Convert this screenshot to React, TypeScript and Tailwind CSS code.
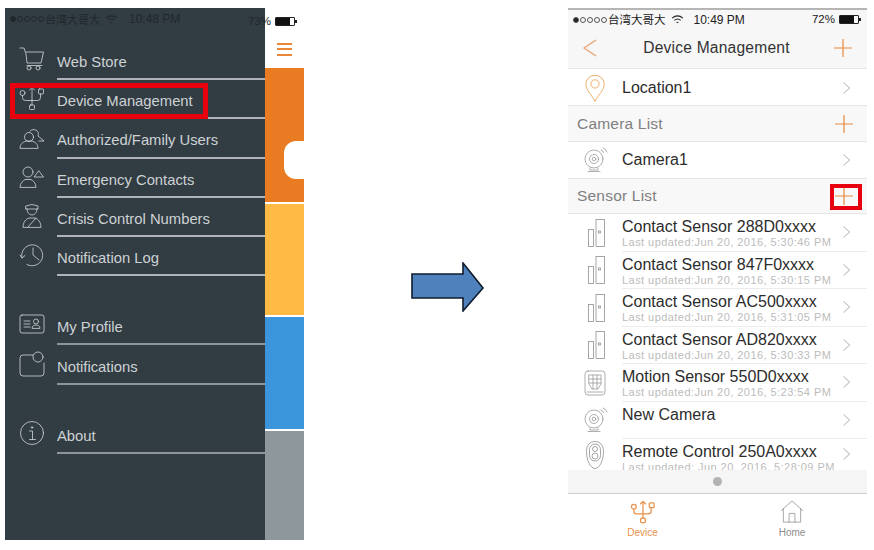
import { ReactNode } from "react";

const font = "font-['Liberation_Sans',Arial,sans-serif]";
const cjk = "font-['Noto_Sans_CJK_SC','Liberation_Sans',sans-serif]";

function Ico({ children, className = "" }: { children: ReactNode; className?: string }) {
  return (
    <svg viewBox="0 0 26 26" fill="none" stroke="currentColor" strokeWidth="0.8" strokeLinecap="round" strokeLinejoin="round" className={className}>
      {children}
    </svg>
  );
}

const DeviceTree = (
  <>
    <path d="M13 4v16M10.500 5 13 2.500 15.500 5" />
    <rect x="10.500" y="20" width="5" height="4.500" rx="1" />
    <circle cx="3.500" cy="8" r="2.500" />
    <rect x="19.500" y="4" width="5" height="5" rx="1" />
    <path d="M3.500 10.500v2q0 3 3 3H13M21.500 9v3.500q0 3-3 3H13" />
  </>
);

const menuIcons: Record<string, ReactNode> = {
  "Web Store": (
    <>
      <path d="M1 2h4l2 6 1 9h14l2.500-11H7M8 19.500h15" />
      <circle cx="10" cy="22" r="2" />
      <circle cx="19" cy="22" r="2" />
    </>
  ),
  "Device Management": DeviceTree,
  "Authorized/Family Users": (
    <>
      <path d="M11 7a5 5 0 0 1 8 1c.5 1 .5 2 0 4l6 5h-5" />
      <circle cx="10" cy="13" r="4.500" />
      <path d="M1 24c0-4 3-6 6-7h6c3 1 6 3 6 7z" />
    </>
  ),
  "Emergency Contacts": (
    <>
      <circle cx="9" cy="8" r="5" />
      <path d="M1 23c0-4 3-6 5-7.500h6c2 1 5 3.500 5 7.500z" />
      <path d="M20 7l4.500 6h-9z" />
    </>
  ),
  "Crisis Control Numbers": (
    <>
      <path d="M7 3l6-1.500L19 3v3H7zM8 6c0 8 10 8 10 0" />
      <path d="M4 24c0-5 3-8 6-9h6c3 1 6 4 6 9zM9 24l8-9" />
    </>
  ),
  "Notification Log": (
    <>
      <path d="M3 16A10.500 10.500 0 1 1 8 22.500M1 13l2 3 3-2.500" />
      <path d="M14 6v7l6 5" />
    </>
  ),
  "My Profile": (
    <>
      <rect x="1" y="4" width="24" height="18" rx="2" />
      <path d="M5 10h6M5 13h6M5 16h6" />
      <circle cx="17" cy="10.500" r="2.500" />
      <path d="M13 17c0-2 2-3 4-3s4 1 4 3z" />
    </>
  ),
  Notifications: (
    <>
      <path d="M14 4H4a3 3 0 0 0-3 3v15a3 3 0 0 0 3 3h18a3 3 0 0 0 3-3V12" />
      <circle cx="19" cy="6" r="5" />
    </>
  ),
  About: (
    <>
      <circle cx="13" cy="13" r="11.500" />
      <circle cx="13" cy="7.500" r="0.800" />
      <path d="M10.500 11H13.500V19M10.500 19.500h6" />
    </>
  ),
};

function MenuRow({ label, h = "h-[39.200px]", line = "border-[#aeb4b7]" }: { label: string; h?: string; line?: string }) {
  return (
    <div className={`flex items-center pl-[14px] ${h}`}>
      <Ico className="w-[26px] h-[26px] text-[#d3d7d9] shrink-0 -mt-[3px]">{menuIcons[label]}</Ico>
      <div className={`ml-[12px] flex-1 h-full pt-[5px] flex items-center border-b-2 ${line} text-[14.800px] text-[#cdd2d4]`}>
        {label}
      </div>
    </div>
  );
}

function Dots({ color }: { color: string }) {
  return (
    <span className="flex gap-[1px] w-[34px] shrink-0">
      <span className={`w-[6px] h-[6px] rounded-full border ${color} bg-current`} />
      <span className={`w-[6px] h-[6px] rounded-full border ${color}`} />
      <span className={`w-[6px] h-[6px] rounded-full border ${color}`} />
      <span className={`w-[6px] h-[6px] rounded-full border ${color}`} />
      <span className={`w-[6px] h-[6px] rounded-full border ${color}`} />
    </span>
  );
}

function Wifi({ stroke }: { stroke: string }) {
  return (
    <svg viewBox="0 0 14 10" fill="none" stroke={stroke} strokeWidth="1.200" className="w-[13px] h-[9px] shrink-0">
      <path d="M1 3.500q6-5 12 0M3.500 6q3.500-3 7 0M6 8.500q1-1 2 0" />
    </svg>
  );
}

function Battery({ fill }: { fill: string }) {
  return (
    <span className="flex items-center ml-[4px]">
      <span className="w-[20px] h-[9px] border border-[#222] rounded-[1px] flex">
        <span className={`w-[14px] ${fill}`} />
      </span>
      <span className="w-[2px] h-[3px] bg-[#222]" />
    </span>
  );
}

function Chevron() {
  return (
    <svg viewBox="0 0 10 16" fill="none" stroke="#c9c9c9" strokeWidth="1.300" className="w-[9px] h-[14px] shrink-0">
      <path d="M1.500 1.500 8.500 8l-7 6.500" />
    </svg>
  );
}

function Plus() {
  return (
    <svg viewBox="0 0 18 18" stroke="#e88a3c" strokeWidth="1.200" className="w-[18px] h-[18px]">
      <path d="M0 9h18M9 0v18" />
    </svg>
  );
}

const gray = "text-[#9a9a9a]";

function CamIcon() {
  return (
    <Ico className={`w-[26px] h-[28px] ${gray}`}>
      <circle cx="12" cy="12" r="9" />
      <circle cx="12" cy="12" r="4.500" />
      <circle cx="12" cy="12" r="1.800" />
      <path d="M8 21v2h8v-2M6 24.500h12M19 3q2 .5 2.500 2.500M21 1q3 .5 4 4" />
    </Ico>
  );
}

function ContactIcon() {
  return (
    <svg viewBox="0 0 17 28" fill="none" stroke="#8f8f8f" strokeWidth="0.8" className="w-[17px] h-[28px] ml-[2px]">
      <rect x="0.500" y="10.500" width="5" height="17" />
      <rect x="8" y="0.500" width="8.500" height="27" />
      <rect x="10.500" y="12" width="2" height="2" />
    </svg>
  );
}

function MotionIcon() {
  return (
    <Ico className={`w-[26px] h-[28px] ${gray}`}>
      <rect x="3" y="1" width="20" height="24" rx="3" />
      <path d="M7 5h12v9l-3 5h-6l-3-5zM7 9h12M7 13h12M11 5v14M15 5v14M5 22h16" />
    </Ico>
  );
}

function RemoteIcon() {
  return (
    <svg viewBox="0 0 18 28" fill="none" stroke="#8f8f8f" strokeWidth="0.8" className="w-[18px] h-[28px]">
      <path d="M9 .500c5 0 8.500 3.500 8.500 10 0 9-4 17-8.500 17S.500 19.500.500 10.500C.500 4 4 .500 9 .500z" />
      <rect x="3.500" y="3" width="11" height="17" rx="5.500" />
      <circle cx="9" cy="8" r="2.500" />
      <circle cx="9" cy="15" r="3" />
    </svg>
  );
}

function PinIcon() {
  return (
    <svg viewBox="0 0 24 30" fill="none" stroke="#eaa65e" strokeWidth="1" className="w-[22px] h-[29px]">
      <path d="M12 29C8 21 2 17 2 10.500a10 10 0 0 1 20 0C22 17 16 21 12 29z" />
      <circle cx="12" cy="10" r="4.500" />
    </svg>
  );
}

function NavRow({ icon, title, h }: { icon: ReactNode; title: string; h: string }) {
  return (
    <div className={`flex items-center bg-white shrink-0 ${h} border-b border-[#e6e6e6]`}>
      <div className="w-[54px] flex justify-center shrink-0">{icon}</div>
      <div className="flex-1 text-[16px] text-[#2c2c2c]">{title}</div>
      <div className="pr-[16px]"><Chevron /></div>
    </div>
  );
}

function SectionHead({ title, h }: { title: string; h: string }) {
  return (
    <div className={`flex items-center justify-between bg-[#f8f8f8] shrink-0 pl-[9px] pr-[14px] ${h} border-b border-[#e6e6e6]`}>
      <span className="text-[15.500px] text-[#808080] tracking-[0.2px]">{title}</span>
      <Plus />
    </div>
  );
}

function SensorRow({ icon, title, sub, h = "h-[37.500px]", clip = false }: { icon: ReactNode; title: string; sub?: string; h?: string; clip?: boolean }) {
  return (
    <div className={`flex bg-white shrink-0 ${h} ${clip ? "overflow-hidden" : ""}`}>
      <div className="w-[54px] flex justify-center items-center shrink-0">{icon}</div>
      <div className={`flex-1 flex items-center border-b ${clip ? "border-transparent" : "border-[#ececec]"} min-w-0`}>
        <div className="flex-1 pt-[4px] h-full">
          <div className="text-[16px] leading-[18px] text-[#2c2c2c] whitespace-nowrap">{title}</div>
          {sub && <div className="text-[11px] leading-[13px] text-[#bcbcbc] tracking-[0.45px] whitespace-nowrap">{sub}</div>}
        </div>
        <div className="pr-[16px]"><Chevron /></div>
      </div>
    </div>
  );
}

export default function App() {
  return (
    <div className={`w-[874px] h-[550px] bg-white flex items-start overflow-hidden ${font}`}>
      {/* left phone */}
      <div className="relative ml-[5px] mt-[8px] w-[299px] h-[532px] flex">
        <div className="w-[260px] h-full bg-[#323c43]">
          <div className="h-[22px] flex items-center pl-[5px] text-[11px] text-[#20282c]">
            <Dots color="border-[#20282c]" />
            <span className={`ml-[1px] ${cjk}`}>台湾大哥大</span>
            <span className="ml-[5px]"><Wifi stroke="#20282c" /></span>
            <span className="ml-[11px] text-[12px] font-medium whitespace-nowrap">10:48 PM</span>
          </div>
          <div className="h-[11px]" />
          {["Web Store", "Device Management", "Authorized/Family Users", "Emergency Contacts", "Crisis Control Numbers", "Notification Log"].map((l) => (
            <MenuRow key={l} label={l} />
          ))}
          <div className="h-[29px]" />
          <MenuRow label="My Profile" h="h-[40px]" line="border-[#8d9599]" />
          <MenuRow label="Notifications" h="h-[40px]" line="border-[#8d9599]" />
          <div className="h-[29px]" />
          <MenuRow label="About" h="h-[40px]" line="border-[#8d9599]" />
        </div>
        <div className="w-[39px] h-full flex flex-col">
          <div className="h-[60px] bg-white flex items-center justify-center">
            <div className="w-[15px] flex flex-col gap-[3.500px] mt-[22px]">
              <div className="h-[2px] bg-[#e8873a]" />
              <div className="h-[2px] bg-[#e8873a]" />
              <div className="h-[2px] bg-[#e8873a]" />
            </div>
          </div>
          <div className="h-[134px] bg-[#e97b22] flex items-center justify-end">
            <div className="w-[20px] h-[38px] bg-white rounded-l-[12px] mt-[50px]" />
          </div>
          <div className="h-[2px] bg-white" />
          <div className="h-[111px] bg-[#feba45]" />
          <div className="h-[2px] bg-white" />
          <div className="h-[112px] bg-[#3b95db]" />
          <div className="h-[2px] bg-white" />
          <div className="flex-1 bg-[#8e979b]" />
        </div>
        {/* status bar right part, spans panel and strip */}
        <div className="absolute right-[7px] top-[5px] flex items-center text-[11.500px] text-[#20282c]">
          <span>73%</span>
          <Battery fill="bg-[#111]" />
        </div>
        {/* highlight */}
        <div className="absolute left-[5px] top-[75px] w-[198px] h-[36px] border-[5px] border-[#e8000f]" />
      </div>

      {/* arrow */}
      <svg viewBox="0 0 74 50" className="ml-[107px] mt-[262px] w-[74px] h-[50px] shrink-0">
        <path d="M1 12h51V1l20 25-20 23V36H1z" fill="#4f81bd" stroke="#0f1c2e" strokeWidth="1.600" />
      </svg>

      {/* right phone */}
      <div className="relative ml-[83px] mt-[8px] w-[299px] h-[532px] flex flex-col border-t-2 border-[#b5b5b5]">
        <div className="h-[59px] shrink-0 bg-[#f7f7f7] border-b border-[#e6e6e6]">
          <div className="h-[19px] flex items-center pl-[5px] pr-[6px] text-[11.500px] text-[#222]">
            <Dots color="border-[#555]" />
            <span className={`ml-[1px] ${cjk}`}>台湾大哥大</span>
            <span className="ml-[5px]"><Wifi stroke="#222" /></span>
            <span className="ml-[10px] text-[12px] font-medium whitespace-nowrap">10:49 PM</span>
            <span className="ml-auto">72%</span>
            <Battery fill="bg-[#111]" />
          </div>
          <div className="h-[38px] flex items-center px-[15px]">
            <svg viewBox="0 0 14 18" fill="none" stroke="#e8a06a" strokeWidth="1.300" className="w-[14px] h-[18px]">
              <path d="M13 1 1 9l12 8" />
            </svg>
            <div className="flex-1 text-center text-[15.600px] pl-[2px] text-[#333] tracking-[0.2px]">Device Management</div>
            <Plus />
          </div>
        </div>
        <NavRow icon={<PinIcon />} title="Location1" h="h-[37px] pt-[2px]" />
        <SectionHead title="Camera List" h="h-[36px]" />
        <NavRow icon={<CamIcon />} title="Camera1" h="h-[37px]" />
        <SectionHead title="Sensor List" h="h-[35px]" />
        <SensorRow icon={<ContactIcon />} title="Contact Sensor 288D0xxxx" sub="Last updated:Jun 20, 2016, 5:30:46 PM" />
        <SensorRow icon={<ContactIcon />} title="Contact Sensor 847F0xxxx" sub="Last updated:Jun 20, 2016, 5:30:15 PM" />
        <SensorRow icon={<ContactIcon />} title="Contact Sensor AC500xxxx" sub="Last updated:Jun 20, 2016, 5:31:05 PM" />
        <SensorRow icon={<ContactIcon />} title="Contact Sensor AD820xxxx" sub="Last updated:Jun 20, 2016, 5:30:33 PM" />
        <SensorRow icon={<MotionIcon />} title="Motion Sensor 550D0xxxx" sub="Last updated:Jun 20, 2016, 5:23:54 PM" />
        <SensorRow icon={<CamIcon />} title="New Camera" />
        <SensorRow icon={<RemoteIcon />} title="Remote Control 250A0xxxx" sub="Last updated: Jun 20, 2016, 5:28:09 PM" h="h-[31px]" clip />
        <div className="h-[24px] shrink-0 bg-[#f5f5f5] border-b border-[#cfcfcf] flex items-center justify-center">
          <div className="w-[9px] h-[9px] rounded-full bg-[#b3b3b3]" />
        </div>
        <div className="flex-1 flex bg-white min-h-0">
          <div className="w-[149px] flex flex-col items-center pt-[5px] text-[#e8914a]">
            <Ico className="w-[26px] h-[26px]">
              <g strokeWidth="1.300">{DeviceTree}</g>
            </Ico>
            <span className="text-[10px] leading-[15px] mt-[1px]">Device</span>
          </div>
          <div className="flex-1 flex flex-col items-center pt-[5px] text-[#8d8d8d]">
            <Ico className="w-[26px] h-[26px]">
              <path d="M2 12 13 2l11 10M4 10v14h18V10M10 24V15h6v9" />
            </Ico>
            <span className="text-[10px] leading-[15px] mt-[1px]">Home</span>
          </div>
        </div>
        <div className="absolute right-[5px] top-[174px] w-[32px] h-[26px] border-[4px] border-[#e8000f]" />
      </div>
    </div>
  );
}
